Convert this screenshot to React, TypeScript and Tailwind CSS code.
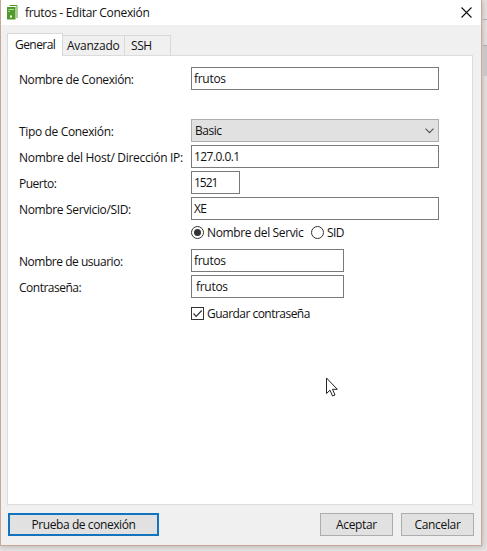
import React from "react";

function Row({ label, track, children }: { label: string; track: string; children: React.ReactNode }) {
  return (
    <div className="flex h-[23px] items-center">
      <label className={`w-[172px] shrink-0 pt-0.5 ${track}`}>{label}</label>
      {children}
    </div>
  );
}

function Field({ value, size, track = "tracking-[-0.3px]" }: { value: string; size: string; track?: string }) {
  return (
    <div className={`flex h-[23px] items-center border border-[#7a7a7a] bg-white pl-0.5 ${size} ${track}`}>{value}</div>
  );
}

function ServerIcon() {
  return (
    <svg width="12" height="16" viewBox="0 0 12 16" className="shrink-0">
      <path d="M2.5 .5h7.5V13" fill="none" stroke="#4f9a28" />
      <rect y="2" width="8.5" height="12.5" fill="#4f9a28" />
      <path d="M1.5 4.5h5.5" stroke="#b7dca2" strokeWidth="1" />
      <path d="M1.5 6.5h1" stroke="#fff" />
      <rect x="3" y="10.5" width="2" height="2" fill="#fff" />
    </svg>
  );
}

export default function App() {
  return (
    <div className="flex h-[551px] w-[487px] overflow-hidden bg-[#e6e2e2] font-['Open_Sans','Noto_Sans',sans-serif] text-[12px] leading-4 whitespace-nowrap text-[#111]">
      <div className="flex h-[546px] w-[482px] shrink-0 flex-col border-r border-b border-l border-[#c9a695] bg-[#f0f0f0] shadow-[1px_1px_5px_#00000030]">
        <header className="flex h-[25px] shrink-0 items-center bg-white pl-1.5">
          <ServerIcon />
          <span className="ml-1.5 tracking-[-0.33px]">frutos - Editar Conexión</span>
          <svg width="11" height="11" viewBox="0 0 11 11" className="mr-[9px] ml-auto">
            <path d="M.5.5l10 10M10.5.5l-10 10" stroke="#111" strokeWidth="1.1" />
          </svg>
        </header>
        <div className="flex h-[30px] shrink-0 items-end pl-1.5">
          <div className="relative z-10 -mb-px flex h-[23px] w-[56px] items-center border border-b-0 border-[#d9d9d9] bg-white pl-[7px] tracking-[-0.55px]">General</div>
          <div className="flex h-5 w-[62px] items-center border-t border-r border-[#d9d9d9] pt-px pl-1 tracking-[-0.25px]">Avanzado</div>
          <div className="flex h-5 w-[46px] items-center border-t border-r border-[#d9d9d9] pt-px pl-1.5 tracking-[-0.4px]">SSH</div>
        </div>
        <main className="ml-1.5 flex h-[450px] w-[466px] shrink-0 flex-col gap-[3px] border border-[#dcdcdc] bg-white pt-[11px] pl-[11px]">
          <Row label="Nombre de Conexión:" track="tracking-[-0.42px]">
            <Field value="frutos" size="w-[248px]" />
          </Row>
          <div className="h-[23px]" />
          <Row label="Tipo de Conexión:" track="tracking-[-0.35px]">
            <div className="flex h-[23px] w-[248px] items-center justify-between border border-[#adadad] bg-[#e1e1e1] pr-1 pl-[3px] tracking-[-0.5px]">
              <span className="pt-px">Basic</span>
              <svg width="9" height="6" viewBox="0 0 9 6">
                <path d="M.5.7l4 4 4-4" fill="none" stroke="#505050" strokeWidth="1.1" />
              </svg>
            </div>
          </Row>
          <Row label="Nombre del Host/ Dirección IP:" track="tracking-[-0.29px]">
            <Field value="127.0.0.1" size="w-[248px]" track="tracking-[-0.55px]" />
          </Row>
          <Row label="Puerto:" track="tracking-[-0.5px]">
            <Field value="1521" size="w-[49px]" track="tracking-[-1px]" />
          </Row>
          <Row label="Nombre Servicio/SID:" track="tracking-[-0.35px]">
            <Field value="XE" size="w-[248px]" track="tracking-[-0.7px]" />
          </Row>
          <div className="flex h-[23px] items-center pb-[5px] pl-[172px]">
            <span className="flex size-[13px] items-center justify-center rounded-full border border-[#333]">
              <span className="size-[7px] rounded-full bg-[#333]" />
            </span>
            <span className="ml-[3px] w-[104px] pt-px tracking-[-0.37px]">Nombre del Servic</span>
            <span className="size-[13px] rounded-full border border-[#333]" />
            <span className="ml-[3px] pt-px tracking-[-0.6px]">SID</span>
          </div>
          <Row label="Nombre de usuario:" track="tracking-[-0.47px]">
            <Field value="frutos" size="w-[153px]" />
          </Row>
          <Row label="Contraseña:" track="tracking-[-0.5px]">
            <Field value="frutos" size="w-[153px] pl-1" />
          </Row>
          <div className="flex h-[23px] items-center pt-0.5 pl-[172px]">
            <span className="flex size-[13px] items-center justify-center border border-[#333]">
              <svg width="11" height="11" viewBox="0 0 11 11">
                <path d="M1.5 5.5l2.7 2.8L9.7 2.5" fill="none" stroke="#333" strokeWidth="1.2" />
              </svg>
            </span>
            <span className="ml-[3px] pt-px tracking-[-0.53px]">Guardar contraseña</span>
          </div>
          <svg width="14" height="21" viewBox="0 0 14 21" className="mt-[50px] ml-[306px]">
            <path d="M1.5 1v15.5l3.5-3.3 2.5 5.8 2.5-1-2.5-5.7h4.8z" fill="#fff" stroke="#222" />
          </svg>
        </main>
        <footer className="flex grow items-start pt-2 pl-[7px]">
          <button className="h-[23px] w-[151px] border-2 border-[#1473bd] bg-[#e1e1e1] pt-px tracking-[-0.42px]">Prueba de conexión</button>
          <button className="ml-[161px] h-[23px] w-[73px] border border-[#adadad] bg-[#e1e1e1] pt-px tracking-[-0.35px]">Aceptar</button>
          <button className="ml-2 h-[23px] w-[73px] border border-[#adadad] bg-[#e1e1e1] pt-px tracking-[-0.35px]">Cancelar</button>
        </footer>
      </div>
      <div className="ml-px flex w-1 flex-col">
        <div className="h-5 border-b border-[#aaa]" />
        <div className="h-[26px] border-b border-[#aaa]" />
        <div className="h-[30px] bg-[#c9c6c8]" />
      </div>
    </div>
  );
}
